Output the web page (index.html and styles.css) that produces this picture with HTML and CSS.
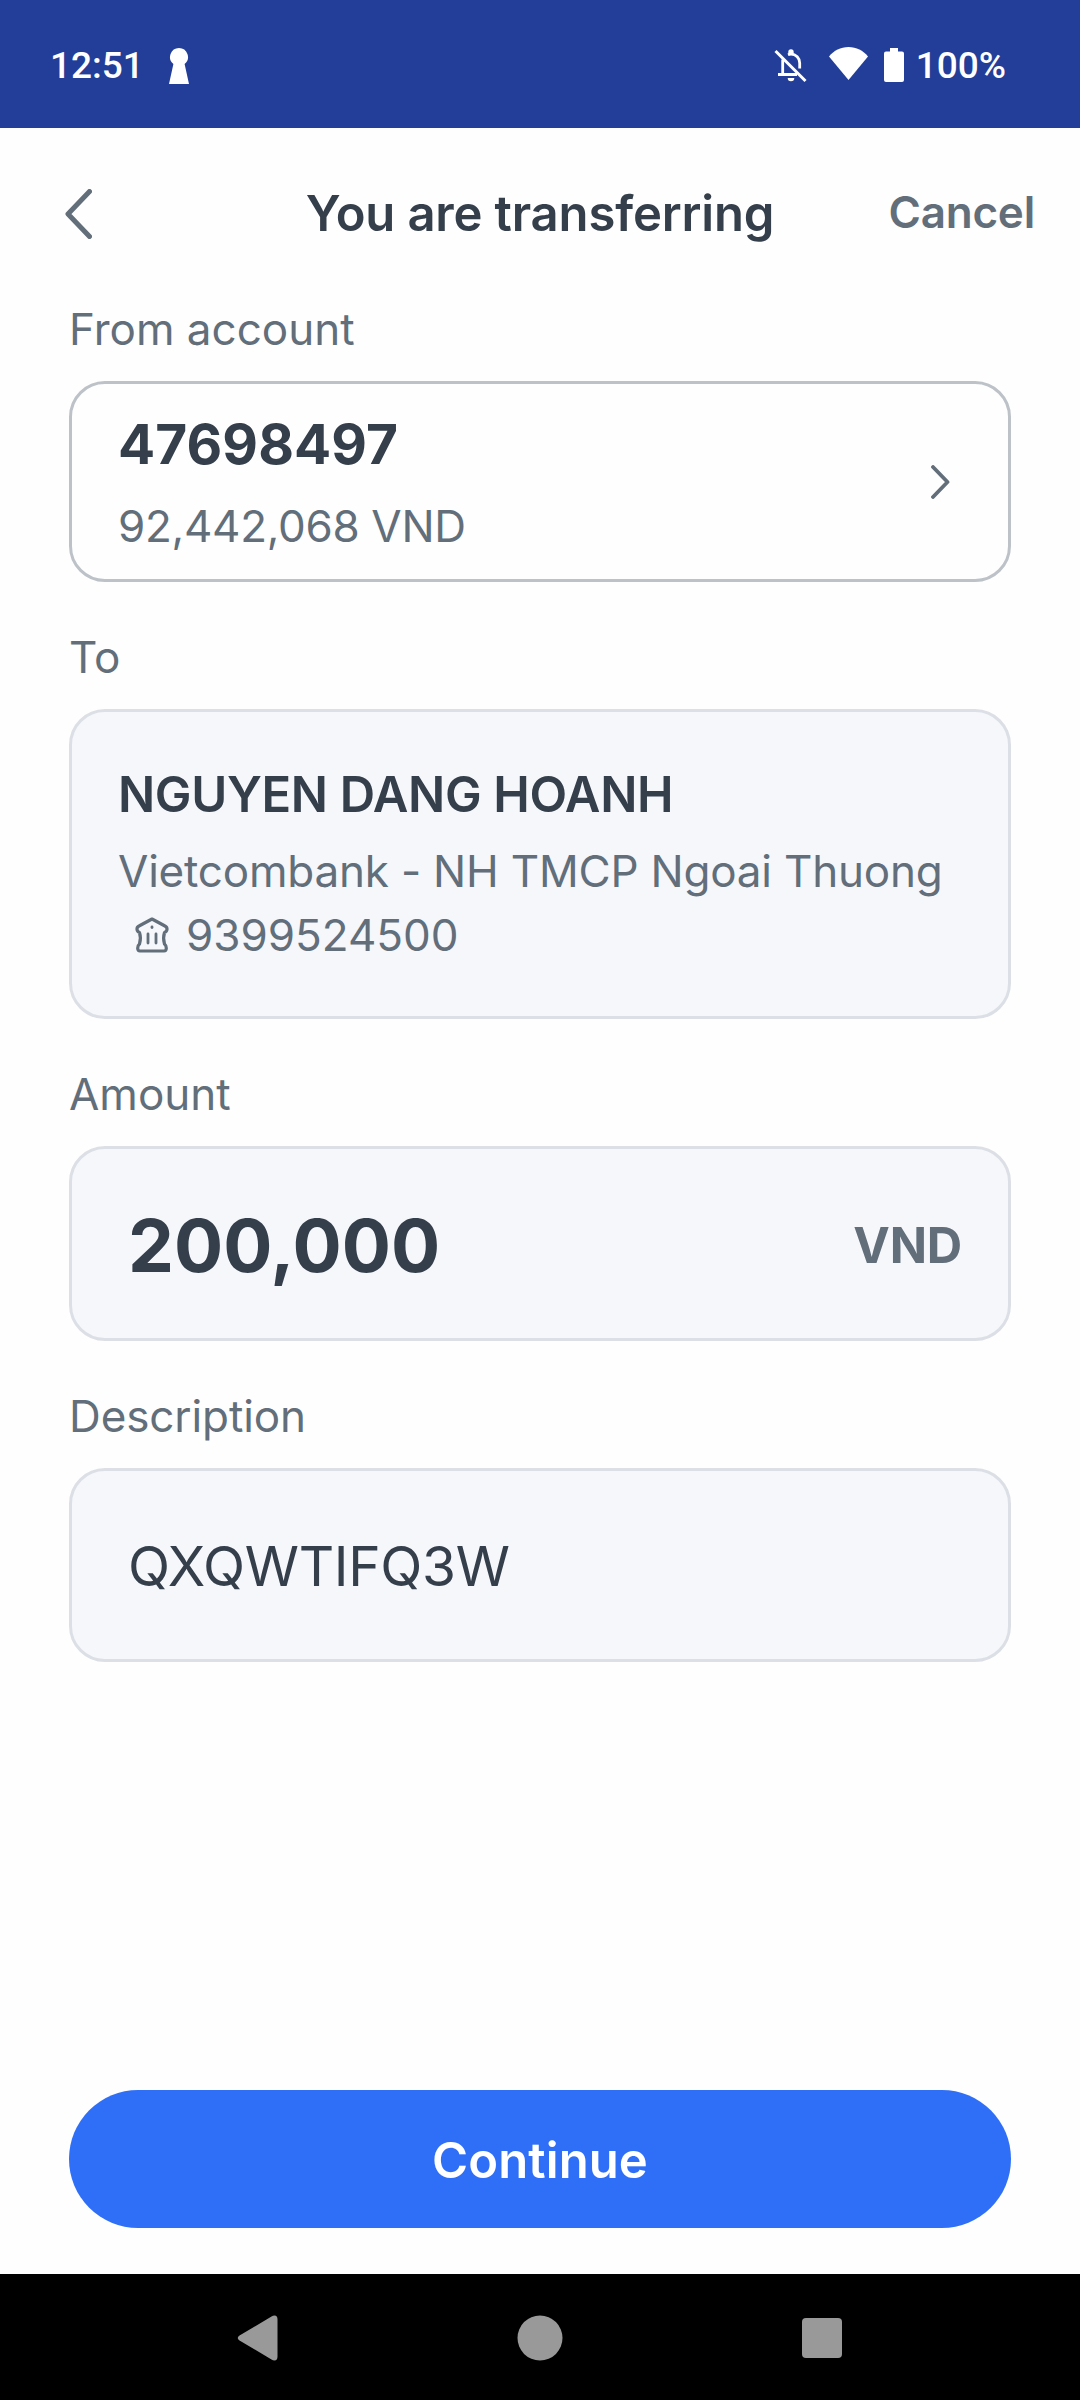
FILE: index.html
```html
<!DOCTYPE html>
<html lang="en">
<head>
<meta charset="utf-8">
<title>You are transferring</title>
<link rel="stylesheet" href="styles.css">
</head>
<body>
<div class="screen">
  <div class="status-bar">
    <span class="clock">12:51</span>
    <svg class="keyhole" viewBox="0 0 20 36"><path d="M10 0a9 9 0 0 1 5.600 16L20 36H0L4.400 16A9 9 0 0 1 10 0z"/></svg>
    <svg class="bell" viewBox="0 0 34 34"><path d="M8.700 10.500V25M14 5.800c1-.400 2-.600 3-.600 5 0 8.700 3.800 8.700 8.800v5.500M4 25.500h19" fill="none" stroke="#fff" stroke-width="2.800"/><path d="M1.500 2l30 30" fill="none" stroke="#fff" stroke-width="3"/><path d="M14.300 5V3a2.700 2.700 0 0 1 5.400 0v2zM13.700 29h6.600a3.300 3.300 0 0 1-6.600 0z"/></svg>
    <svg class="wifi" viewBox="0 0 39 33"><path d="M19.500 33L0 9.500C5 3.500 11.500 0 19.500 0S34 3.500 39 9.500z"/></svg>
    <svg class="battery" viewBox="0 0 20 34"><path d="M6 0h8v3.500h4a2 2 0 0 1 2 2V32a2 2 0 0 1-2 2H2a2 2 0 0 1-2-2V5.500a2 2 0 0 1 2-2h4z"/></svg>
    <span class="percent">100%</span>
  </div>
  <header class="header">
    <svg class="back" viewBox="0 0 27 50"><path d="M24.500 2.500L3 25l21.500 22.500"/></svg>
    <h1 class="title">You are transferring</h1>
    <span class="cancel">Cancel</span>
  </header>
  <main class="form">
    <div class="label">From account</div>
    <section class="card card-from">
      <div>
        <div class="account">47698497</div>
        <div class="detail balance">92,442,068 VND</div>
      </div>
      <svg class="chevron" viewBox="0 0 19 34"><path d="M2 2l14.500 15L2 32"/></svg>
    </section>
    <div class="label">To</div>
    <section class="card card-to">
      <div class="name">NGUYEN DANG HOANH</div>
      <div class="detail bank-name">Vietcombank - NH TMCP Ngoai Thuong</div>
      <div class="detail bank-row">
        <svg class="bank" viewBox="0 0 34 36"><path d="M17 2L4 9C1 10.500 1.500 14.500 4.500 15.500c1.300 4 1.300 7.500 0 11.500C2 29 2 34 5 34h24c3 0 3-5 .500-7-1.300-4-1.300-7.500 0-11.500 3-1 3.500-5 .500-6.500z" stroke-width="3.200"/><path d="M13 17v9M21 17v9" stroke-width="2.800"/><path d="M17 10v.500" stroke-width="2.800"/></svg>
        <span>9399524500</span>
      </div>
    </section>
    <div class="label">Amount</div>
    <section class="card card-amount">
      <span class="amount">200,000</span>
      <span class="currency">VND</span>
    </section>
    <div class="label label-note">Description</div>
    <section class="card card-note"><span class="note">QXQWTIFQ3W</span></section>
  </main>
  <button class="continue">Continue</button>
  <nav class="nav-bar">
    <svg viewBox="0 0 46 46"><path d="M39.500 .500q3 0 3 4v37q0 4-3 4-1.500 0-3-1L4.500 25.500Q1 23 4.500 20.500L36.500 1.500q1.500-1 3-1z"/></svg>
    <svg viewBox="0 0 46 46"><circle cx="23" cy="23" r="22.500"/></svg>
    <svg viewBox="0 0 46 46"><rect x="3" y="3" width="40" height="40" rx="4"/></svg>
  </nav>
</div>
</body>
</html>
```
FILE: styles.css
```css
* { box-sizing: border-box; }
body { margin: 0; background: #fff; font-family: Inter, sans-serif; color: #353f4b; }
svg { display: block; flex: none; }
.screen { width: 1080px; height: 2400px; display: flex; flex-direction: column; background: #fefefe; }
.status-bar { height: 128px; background: #223e98; color: #fff; display: flex; align-items: center; padding: 3px 74px 0 50px; font: 500 37px/44px Roboto, sans-serif; }
.status-bar svg { fill: #fff; }
.keyhole { width: 20px; height: 36px; margin-left: 25px; margin-right: auto; }
.bell { width: 34px; height: 34px; margin-right: 21px; }
.wifi { width: 39px; height: 33px; margin-right: 16px; margin-bottom: 4px; }
.battery { width: 20px; height: 34px; margin-right: 12px; margin-bottom: 2px; }
.header { height: 171px; display: grid; grid-template-columns: 180px 1fr 200px; align-items: center; padding: 0 45px 0 65px; }
.back { width: 27px; height: 50px; fill: none; stroke: #626e7a; stroke-width: 5; stroke-linecap: round; stroke-linejoin: round; }
.title { margin: 0; font-size: 49px; line-height: 60px; font-weight: 600; letter-spacing: -0.15px; text-align: center; }
.cancel { font-size: 44px; line-height: 60px; font-weight: 600; letter-spacing: -0.2px; color: #626e7a; justify-self: end; padding-bottom: 3px; }
.form { padding: 0 69px; flex: 1; }
.label { font-size: 44px; line-height: 60px; color: #626e7a; margin-bottom: 22px; }
.label-note { letter-spacing: -0.1px; }
.card { border: 3px solid #dcdfe5; border-radius: 36px; background: #f5f7fb; margin-bottom: 45px; padding: 0 46px; }
.card-from { height: 201px; display: flex; justify-content: space-between; padding-right: 58px; align-items: center; background: #fefefe; border-color: #bcc2c8; }
.account { font-size: 55px; line-height: 76px; font-weight: 700; letter-spacing: 0.1px; }
.detail { font-size: 44px; line-height: 64px; color: #626e7a; white-space: nowrap; }
.balance { letter-spacing: -0.3px; margin-top: 12px; }
.chevron { width: 19px; height: 34px; fill: none; stroke: #626e7a; stroke-width: 3.800px; stroke-linecap: round; stroke-linejoin: round; }
.card-to { height: 310px; padding-top: 51px; }
.name { font-size: 49px; line-height: 64px; font-weight: 600; letter-spacing: -0.35px; }
.bank-name { margin-top: 12px; letter-spacing: -0.2px; }
.bank-row { display: flex; align-items: center; padding-left: 17px; gap: 17px; }
.bank { width: 34px; height: 36px; fill: none; stroke: #626e7a; stroke-linecap: round; stroke-linejoin: round; }
.card-amount { height: 195px; display: flex; align-items: center; justify-content: space-between; padding-left: 56px; padding-top: 3px; }
.amount { font-size: 73px; font-weight: 700; }
.currency { font-size: 49px; font-weight: 700; letter-spacing: -0.2px; color: #626e7a; }
.card-note { height: 194px; display: flex; align-items: center; padding-left: 56px; padding-top: 2px; }
.note { font-size: 55px; letter-spacing: -0.35px; }
.continue { height: 138px; margin: 0 69px 46px; padding: 3px 0 0; border: 0; border-radius: 69px; background: #2f6ff8; color: #fff; font: 600 49px/60px Inter, sans-serif; letter-spacing: 0.1px; }
.nav-bar { height: 126px; background: #000; display: flex; justify-content: space-between; align-items: center; padding: 2px 235px 0; }
.nav-bar svg { width: 46px; height: 46px; fill: #999; }
```
